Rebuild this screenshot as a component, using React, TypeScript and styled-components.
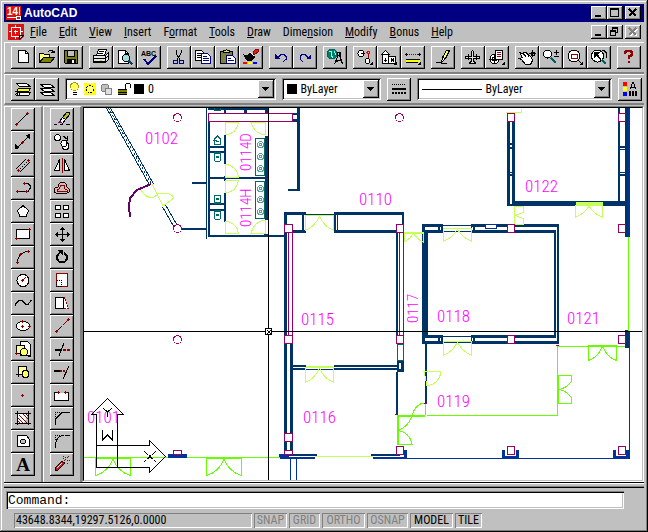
import React from 'react';
import styled, { createGlobalStyle, css } from 'styled-components';

const GlobalStyle = createGlobalStyle`
  * { box-sizing: border-box; }
  body { margin: 0; background: #c0c0c0; font-family: "Roboto Condensed", "Liberation Sans", sans-serif; font-size: 12px; color: #000; }
  button, input, select { font: inherit; color: inherit; margin: 0; }
`;

const raised = css`
  box-shadow: inset -1px -1px #000, inset 1px 1px #fff, inset -2px -2px #808080;
`;
const sunken = css`
  box-shadow: inset 1px 1px #808080, inset -1px -1px #fff;
`;

const Window = styled.div`
  display: flex;
  flex-direction: column;
  min-height: 100vh;
  padding: 4px;
  background: #c0c0c0;
  box-shadow: inset -1px -1px #000, inset 1px 1px #c0c0c0, inset -2px -2px #808080, inset 2px 2px #fff;
`;

const TitleBar = styled.header`
  display: flex;
  align-items: center;
  height: 18px;
  padding: 0 3px 0 2px;
  gap: 2px;
  background: #000080;
`;
const Title = styled.h1`
  flex: 1;
  margin: 0;
  color: #fff;
  font: bold 12px "Liberation Sans", sans-serif;
`;
const WindowButtons = styled.div`
  display: flex;
`;
const WindowButton = styled.button<{ $apart?: boolean }>`
  width: 16px;
  height: 14px;
  margin-left: ${(p) => (p.$apart ? 2 : 0)}px;
  padding: 0;
  border: 0;
  background: #c0c0c0;
  ${raised}
`;

const MenuRow = styled.div`
  display: flex;
  align-items: center;
  height: 20px;
  padding: 0 3px 0 4px;
`;
const MenuBar = styled.nav`
  flex: 1;
  display: flex;
`;
const MenuItem = styled.button`
  padding: 0 6px;
  border: 0;
  background: none;
  line-height: 18px;
`;

const Toolbar = styled.div<{ $height: number }>`
  display: flex;
  align-items: flex-start;
  gap: 6px;
  height: ${(p) => p.$height}px;
  border-top: 1px solid #fff;
  border-left: 1px solid #fff;
  border-bottom: 2px solid #808080;
  padding: 3px 2px 0 6px;
`;
const ButtonGroup = styled.div`
  display: flex;
`;
const ToolButton = styled.button`
  flex: none;
  width: 24px;
  height: 23px;
  padding: 0;
  border: 0;
  background: #c0c0c0;
  ${raised}
`;
const Glyph = styled.svg`
  display: block;
  fill: none;
  stroke: #000;
  shape-rendering: crispEdges;
`;

const Combo = styled.label<{ $grow: number; $basis: number }>`
  display: flex;
  align-items: center;
  flex: ${(p) => p.$grow} 1 ${(p) => p.$basis}px;
  min-width: 0;
  height: 22px;
  padding: 2px 2px 2px 5px;
  background: #fff;
  box-shadow: inset 1px 1px #808080, inset -1px -1px #fff, inset 2px 2px #000, inset -2px -2px #c0c0c0;
`;
const ComboSelect = styled.select`
  flex: 1;
  min-width: 0;
  appearance: none;
  border: 0;
  padding: 0 0 0 4px;
  background: transparent;
  outline: 0;
`;
const DropArrow = styled.span`
  width: 16px;
  height: 18px;
  background: #c0c0c0;
  ${raised}
`;
const Swatch = styled.span`
  width: 10px;
  height: 10px;
  background: #000;
`;
const LineSample = styled.span`
  width: 60px;
  height: 1px;
  background: #000;
`;

const Workspace = styled.main`
  flex: 1;
  display: flex;
  padding-top: 1px;
  min-height: 0;
`;
const Dock = styled.div<{ $width: number }>`
  flex: none;
  width: ${(p) => p.$width}px;
  padding: 1px 0 4px 6px;
  border-left: 1px solid #fff;
  border-top: 1px solid #fff;
  border-right: 2px solid #808080;
  display: flex;
  flex-direction: column;
`;
const Viewport = styled.section`
  flex: 1;
  min-width: 0;
  border: solid;
  border-width: 1px;
  border-color: #808080 #fff #fff #808080;
  display: flex;
`;
const ViewportInner = styled.div`
  flex: 1;
  min-width: 0;
  border: solid;
  border-width: 1px;
  border-color: #000 #c0c0c0 #c0c0c0 #000;
  background: #fff;
`;
const Drawing = styled.svg`
  display: block;
  width: 100%;
  height: 100%;
  fill: none;
  shape-rendering: crispEdges;
  text {
    font-family: "Roboto Condensed", "Liberation Sans", sans-serif;
    font-weight: 300;
    font-size: 17px;
    fill: #f0f;
  }
`;
const SideLabel = styled.text`
  && { font-size: 15px; }
`;

const Splitter = styled.div`
  height: 6px;
  border-top: 1px solid #000;
  border-bottom: 1px solid #000;
  box-shadow: inset 0 1px #fff, inset 0 -1px #808080;
`;
const CommandLine = styled.form`
  display: flex;
  align-items: center;
  height: 18px;
  margin: 3px 20px 4px 2px;
  padding: 0 2px;
  background: #fff;
  box-shadow: inset 1px 1px #808080, inset 2px 2px #000, inset -1px -1px #fff, inset -2px -2px #c0c0c0;
  font: 13px "Liberation Mono", monospace;
`;
const CommandInput = styled.input`
  flex: 1;
  min-width: 0;
  border: 0;
  padding: 0;
  outline: 0;
  background: transparent;
`;
const StatusBar = styled.footer`
  display: flex;
  gap: 2px;
  padding: 0 0 0 10px;
  height: 15px;
`;
const Coordinates = styled.output`
  width: 238px;
  padding: 0 2px;
  line-height: 15px;
  ${sunken}
`;
const Toggle = styled.button<{ $on?: boolean; $width: number }>`
  width: ${(p) => p.$width}px;
  padding: 0;
  border: 0;
  line-height: 15px;
  text-align: center;
  background: transparent;
  color: ${(p) => (p.$on ? '#000' : '#808080')};
  ${sunken}
`;

const RED = '#900000';
const Dots = ({ at }: { at: number[][] }) => (
  <>
    {at.map(([x, y]) => (
      <path key={`${x}-${y}`} d={`M${x - 1} ${y + 0.5}h3M${x + 0.5} ${y - 1}v3`} stroke={RED} />
    ))}
  </>
);
const Flyout = () => <path d="M20 15v4h-4z" fill="#000" stroke="none" />;

const icons: Record<string, React.ReactNode> = {
  New: <><path d="M7.5 4.5h7l3 3v9h-10z" fill="#fff" /><path d="M14.5 4.5v3h3" /></>,
  Open: <><path d="M4.5 16.5v-9h4l1 1h5v3" fill="#ffff80" /><path d="M4.5 16.5l4-5h11l-4 5z" fill="#808000" /><path d="M12.5 6.5l2-2h3l1 2M16 6.5h3v-2" /></>,
  Save: <><path d="M5.5 4.5h13v13h-12l-1-1z" fill="#808000" /><path d="M8.5 5v5.5h7V5" fill="#c0c0c0" /><path d="M8 13h8v4H8z" fill="#000" /><path d="M14 14v3" stroke="#fff" strokeWidth="2" /></>,
  Print: <><path d="M7.5 9.5l2-6h8l-2 6z" fill="#fff" /><path d="M10 5.5h5M9 7.5h5" /><path d="M4.5 9.5h12l3-3v7l-3 3h-12z" fill="#e8e8e8" /><path d="M4.5 12.5h12l3-3M16.5 9.5v7M5 15.5h11" /><path d="M11 14.5h2" stroke="#e0d000" /></>,
  Preview: <><path d="M5.5 4.5h7l3 3v10h-10z" fill="#fff" /><path d="M12.5 4.5v3h3" /><circle cx="13" cy="12" r="3.5" fill="#9fe0e0" /><path d="M15.5 14.5l4 4" strokeWidth="2" stroke="#103a60" /></>,
  Spelling: <><text x="4" y="10" fontSize="7" fontWeight="700" fontFamily="Liberation Sans, sans-serif" fill="#000" stroke="none">ABC</text><path d="M7 13l4 5 8-8" stroke="#000080" strokeWidth="2" /></>,
  Cut: <><path d="M9 4v3l4 7M14 4v3l-4 7" /><circle cx="8.5" cy="16" r="2" stroke="#000080" /><circle cx="14.5" cy="16" r="2" stroke="#000080" /></>,
  Copy: <><path d="M4.5 4.5h6l2 2v8h-8z" fill="#fff" /><path d="M6 7.5h4M6 9.5h5M6 11.5h4" /><path d="M10.5 7.5h6l3 3v7h-9z" fill="#fff" stroke="#000080" /><path d="M12 10.5h4M12 12.5h6M12 14.5h6" stroke="#000080" /></>,
  Paste: <><path d="M5.5 5.5h12v12h-12z" fill="#808040" /><path d="M8.5 6.5v-2h2l1-1 1 1h2v2z" fill="#e0e080" /><path d="M11.5 9.5h6l3 3v5h-9z" fill="#fff" stroke="#000080" /><path d="M13 12.5h3M13 14.5h6" stroke="#000080" /></>,
  'Match Properties': <><path d="M14 6l3-3h2v3l-4 3z" fill="#d02020" stroke={RED} /><path d="M11 7l5 4-3 3H8l-3-5 4 1z" fill="#000" /><path d="M11.5 6.5l4 4" stroke="#fff" /><path d="M4 17h4" stroke="#f00" strokeWidth="2" /><path d="M9 17h4" stroke="#ff0" strokeWidth="2" /><path d="M14 17h4" stroke="#00f" strokeWidth="2" /></>,
  Undo: <><path d="M9 11.500l3-3h3l2 2v3l-3 2" stroke="#000080" /><path d="M6 8v5h5z" fill="#000080" stroke="none" /></>,
  Redo: <><path d="M15 11.500l-3-3H9l-2 2v3l3 2" stroke="#000080" /><path d="M18 8v5h-5z" fill="#000080" stroke="none" /></>,
  'Launch Browser': <><circle cx="9" cy="8" r="5" fill="#008060" stroke="#006060" /><path d="M6 5l3 1-1 3 2 3M11 5l2 4" stroke="#80ffff" /><path d="M15.5 9l-4 9M16.5 9l3 9M13 14.500h5M12 16.500l4-2M16 6v4" /><circle cx="16" cy="8" r="2" /></>,
  'Object Snap': <><circle cx="8" cy="7.5" r="3" fill="#fff" /><path d="M8 7.5h4" /><path d="M15.5 7v6" stroke={RED} /><circle cx="15.5" cy="6.5" r="1.5" stroke="#f00" /><circle cx="14.5" cy="15" r="2.5" fill="#fff" /><Flyout /></>,
  UCS: <><path d="M4.5 8.5l4-4 4 4z" fill="#fff" /><path d="M5.5 8.5h6v9h-6z" fill="#fff" /><path d="M11.5 10.5h7v7h-7z" fill="#fff" /><path d="M8.5 12v4M7 14.5h3M14 12.5l3 3M17 12.5l-3 3" /><Flyout /></>,
  Distance: <><path d="M6 8.5h12" stroke={RED} strokeDasharray="1 1" /><path d="M4 8.5h3M17 8.5h3M5.5 7v3M18.5 7v3" /><path d="M5 13.5h14" /><path d="M5 15h14" stroke="#ff0" strokeWidth="2" /><path d="M5 16.5h12" /><Flyout /></>,
  Redraw: <><path d="M11.5 11.5l4-7h3l-4 8-4 4z" fill="#ffff60" /><path d="M11.5 11.5l-1 5 4-4z" fill="#fff" /><path d="M5 16.5h4l2 1h5" /></>,
  'Aerial View': <><path d="M4.500 10.500h6v-5l1-1 1 1v5h6v2h-6v3l2 1v1h-6v-1l2-1v-3h-6z" fill="#e0e0e0" /><path d="M7.500 8v6M15.500 8v6" /></>,
  'Named Views': <><circle cx="9.5" cy="13" r="4.500" fill="#fff" /><circle cx="9.5" cy="13" r="2" /><path d="M9.5 8v10M4 13.5h10" /><path d="M10.5 4.5h7v9h-7z" fill="#fff" /><path d="M12 6.5h4M12 8.5h4M12 10.5h4" stroke={RED} /><Flyout /></>,
  Pan: <><path d="M4.5 6.500l3 1 2-1 3 1 4 4 1 3-2 4h-5l-4-5-2-1 3-1z" fill="#fff" /><path d="M8 7.5l3 3M11 6.5l3 4M17.5 4v7M14 7.5h7M16 6h3v3h-3z" /></>,
  'Zoom Realtime': <><circle cx="8.500" cy="8" r="4" fill="#fff" /><path d="M12 12l5 5" strokeWidth="2" stroke="#006060" /><path d="M15 6.5h5M17.5 4v5M15 10.5h5" /></>,
  'Zoom Window': <><circle cx="11" cy="10" r="6" fill="#fff" /><path d="M8.5 8.5h6v4h-6z" stroke={RED} /><path d="M15 14l3 3" /><Flyout /></>,
  'Zoom Previous': <><circle cx="10.500" cy="10" r="6" fill="#fff" /><path d="M7 12V6h6l-2 2 3 5-1 1-4-4z" fill="#000" stroke="none" /><path d="M15 14l4 4" strokeWidth="2" stroke="#006060" /><path d="M15 4.500h2l2 2v5" /></>,
  Help: <><path d="M8 8V6h1V5h5v1h1v3h-1v1h-2v3" stroke={RED} strokeWidth="2" /><path d="M11 15h2v2h-2z" fill={RED} stroke="none" /></>,
  'Make Current': <><path d="M7.5 14.5h12l-2 3h-12z" fill="#fff" /><path d="M7.500 10.500h12l-2 3h-12z" fill="#ff0" /><path d="M5.500 5.500h10l4 3h-11z" fill="#fff" /><path d="M3.5 17.5l4-4M4 13.500h4v4" /></>,
  Layers: <><path d="M5.5 14.5h10l4 3h-10z" fill="#fff" /><path d="M5.5 10.500h10l4 3h-10z" fill="#fff" /><path d="M5.5 6.500h10l4 3h-10z" fill="#fff" /></>,
  Linetype: <><path d="M5 6.500h14" strokeDasharray="1 1" /><path d="M5 11h14" strokeWidth="2" /><path d="M5 15h14" strokeWidth="2" strokeDasharray="2 1" /></>,
  Properties: <><path d="M5 4h4v4H5z" fill="#f00" stroke="none" /><path d="M5 9h4v4H5z" fill="#ff0" stroke="none" /><path d="M5 14h4v4H5z" fill="#00f" stroke="none" /><path d="M12 11l3-7 3 7M13 9.5h4" /><path d="M11 15.5h9" strokeWidth="5" strokeDasharray="2 1" /></>,
  Line: <><path d="M6 16L17 5" /><Dots at={[[5, 16], [16, 5]]} /></>,
  'Construction Line': <><path d="M5 18L19 4" /><path d="M4 18v-5l5 4zM19 3v5l-5-4z" fill="#000" stroke="none" /><Dots at={[[11, 11]]} /></>,
  Multiline: <><path d="M5 15L15 5M9 18L19 8" /><path d="M7 17L17 7" strokeDasharray="1 2" /><Dots at={[[7, 16], [17, 6]]} /></>,
  Polyline: <><path d="M7 14.5h9M13 6.5h4l2 2v3l-2 3" /><Dots at={[[6, 14], [15, 14], [13, 6]]} /></>,
  Polygon: <path d="M12 5.5l5.5 5-2.5 6h-6l-2.5-6z" fill="#fff" />,
  Rectangle: <><path d="M5.5 6.5h13v9h-13z" fill="#fff" /><Dots at={[[5, 15], [18, 6]]} /></>,
  Arc: <><path d="M6.5 17q0-10 11-12" /><Dots at={[[6, 16], [9, 8], [17, 5]]} /></>,
  Circle: <><circle cx="12" cy="11.5" r="6" fill="#fff" /><path d="M12 11l3-3" stroke={RED} /><Dots at={[[11, 11]]} /></>,
  Spline: <path d="M4.5 14v-2l4-4h2l4 4h3l3-4" />,
  Ellipse: <><ellipse cx="12" cy="11" rx="7" ry="4.5" fill="#fff" /><Dots at={[[11, 6], [11, 11], [18, 11]]} /></>,
  'Insert Block': <><path d="M9.5 3.5h7l3 3v11h-10z" fill="#fff" /><path d="M5.5 7.5h8v8h-8z" fill="#ffffa0" /><circle cx="13" cy="14" r="3.5" fill="#ffff60" /><Dots at={[[5, 15]]} /><Flyout /></>,
  'Make Block': <><path d="M7.5 5.5h8v8h-8z" fill="#ffffa0" /><circle cx="14.5" cy="13" r="3.5" fill="#ffff60" /><path d="M5 13.5h5M7.500 11v5" /></>,
  Point: <Dots at={[[11, 11]]} />,
  Hatch: <><path d="M6.5 4v14M17.5 4v14M4 6.5h16M4 16.5h16" /><path d="M7 7h10l-4 9H7z" fill="#fff" stroke="none" /><path d="M8 8l8 8M12 7l5 5M7 11l5 5M15 7l2 2M7 14l2 2" stroke={RED} /></>,
  Region: <><path d="M6.5 5.5h9l3 4v7h-12z" fill="#fff" /><circle cx="12" cy="11.5" r="2.5" fill="#c0c0c0" /></>,
  Text: <text x="12" y="18" textAnchor="middle" fontSize="19" fontWeight="700" fontFamily="Liberation Serif, serif" fill="#000" stroke="none">A</text>,
  Erase: <><path d="M4 16.500h3M10 16.500h3M16 16.500h4" /><path d="M12.500 9.500l4-5h3v2l-4 5z" fill="#c0c020" /><path d="M9.500 13.500l3-4 3 2-3 4z" fill="#fff" /><path d="M8 15l2-2 2 2" fill="#800080" stroke="#800080" /></>,
  'Copy Object': <><circle cx="7.5" cy="6.5" r="3" fill="#fff" /><circle cx="15.5" cy="15" r="3.500" fill="#fff" /><circle cx="14" cy="12.500" r="3" fill="#fff" /><path d="M13 5l4 3M17.500 5v4h-3" /></>,
  Mirror: <><path d="M9.5 5.5v11h-5zM14.5 5.5v11h5z" fill="#fff" /><path d="M12 4v15" stroke={RED} /></>,
  Offset: <><path d="M8 10l1-3 2-2h3l2 2 1 3 2 2v3l-2 1H6l-2-1v-3l2-2z" fill="#e8b0b0" /><path d="M9 12l2-4h3l1 4 2 1v1H7v-1z" stroke={RED} fill="#c0c0c0" /></>,
  Array: <path d="M5.5 5.5h5v4h-5zM13.5 5.5h5v4h-5zM5.5 13.5h5v4h-5zM13.5 13.5h5v4h-5z" fill="#fff" />,
  Move: <><path d="M12.5 5v14M6 11.5h13" /><path d="M12.5 4l3 3h-6zM12.5 19l3-3h-6zM5 11.5l3-3v6zM20 11.5l-3-3v6z" fill="#000" stroke="none" /></>,
  Rotate: <><path d="M14 7a5 5 0 1 1-4 0" strokeWidth="2" /><path d="M7 4h6v6z" fill="#000" stroke="none" /></>,
  Scale: <><path d="M6.5 4.5h11v13h-11z" fill="#fff" stroke={RED} /><path d="M6.5 11.5h5v6h-5z" strokeDasharray="1 1" /></>,
  Stretch: <><path d="M5.5 5.5h8v11h-8z" fill="#fff" /><path d="M13.500 5.5h1l4 11h-5" fill="#fff" stroke={RED} strokeDasharray="2 1" /></>,
  Lengthen: <><path d="M6 17l5-5" /><path d="M11 12l7-7" stroke={RED} strokeDasharray="2 1" /><Dots at={[[6, 16], [18, 4]]} /></>,
  Trim: <><path d="M5 12h6" strokeWidth="2" /><path d="M9 18L14 5" /><path d="M13 12h7" stroke={RED} strokeWidth="2" strokeDasharray="3 1" /></>,
  Extend: <><path d="M4 10h6" strokeWidth="2" /><path d="M10 10h6" stroke={RED} strokeWidth="2" strokeDasharray="2 1" /><path d="M13 18l6-13" /></>,
  Break: <><path d="M8 8.5H4.5v8h14v-8H15" fill="#fff" /><Dots at={[[8, 8], [15, 8]]} /></>,
  Chamfer: <><path d="M5.5 18v-6l7-7h7" /><path d="M5.5 10V5.5h6" strokeDasharray="1 1" /></>,
  Fillet: <><path d="M5.5 18v-4q1-8 9-9h5" /><path d="M5.5 10V5.5h6" strokeDasharray="1 1" /></>,
  Explode: <><path d="M5.500 14.500l6-6 3 1v1l-7 7h-2z" fill="#d01818" /><path d="M7 15l5-5" stroke="#fff" /><path d="M14 8l5-5M15 4l1 2M20 7.500h-3M17 10l2 1M13.500 3v3" stroke={RED} strokeDasharray="1 1" /></>,
};

const Tool = ({ name }: { name: string }) => (
  <ToolButton type="button" aria-label={name}>
    <Glyph width="24" height="23" viewBox="0 0 24 23">{icons[name]}</Glyph>
  </ToolButton>
);

const standardTools = [
  ['New', 'Open', 'Save'],
  ['Print', 'Preview', 'Spelling'],
  ['Cut', 'Copy', 'Paste', 'Match Properties'],
  ['Undo', 'Redo'],
  ['Launch Browser'],
  ['Object Snap', 'UCS', 'Distance'],
  ['Redraw'],
  ['Aerial View', 'Named Views'],
  ['Pan', 'Zoom Realtime', 'Zoom Window', 'Zoom Previous'],
  ['Help'],
];
const drawTools = ['Line', 'Construction Line', 'Multiline', 'Polyline', 'Polygon', 'Rectangle', 'Arc', 'Circle', 'Spline', 'Ellipse', 'Insert Block', 'Make Block', 'Point', 'Hatch', 'Region', 'Text'];
const modifyTools = ['Erase', 'Copy Object', 'Mirror', 'Offset', 'Array', 'Move', 'Rotate', 'Scale', 'Stretch', 'Lengthen', 'Trim', 'Extend', 'Break', 'Chamfer', 'Fillet', 'Explode'];

const menus: [string, number][] = [['File', 0], ['Edit', 0], ['View', 0], ['Insert', 0], ['Format', 1], ['Tools', 0], ['Draw', 0], ['Dimension', 4], ['Modify', 0], ['Bonus', 0], ['Help', 0]];

const Controls = ({ child }: { child?: boolean }) => (
  <WindowButtons>
    <WindowButton type="button" aria-label="Minimize">
      <Glyph width="16" height="14" viewBox="0 0 16 14"><path d="M4 10h6" strokeWidth="2" /></Glyph>
    </WindowButton>
    <WindowButton type="button" aria-label={child ? 'Restore' : 'Maximize'}>
      <Glyph width="16" height="14" viewBox="0 0 16 14">
        {child
          ? <path d="M5.5 6V2.5h5v5H9M5 3.5h6M3.5 5.5h5v5h-5zM3 6.5h6" />
          : <path d="M3.5 2.5h8v8h-8zM3 3.5h9" />}
      </Glyph>
    </WindowButton>
    <WindowButton type="button" aria-label="Close" $apart>
      <Glyph width="16" height="14" viewBox="0 0 16 14">
        {child && <path d="M5 4l7 7M12 4l-7 7" stroke="#fff" strokeWidth="2" />}
        <path d="M4 3l7 7M11 3l-7 7" strokeWidth="1.5" stroke={child ? '#808080' : '#000'} />
      </Glyph>
    </WindowButton>
  </WindowButtons>
);

const Arrow = () => (
  <DropArrow aria-hidden>
    <Glyph width="16" height="18" viewBox="0 0 16 18"><path d="M4 7h7l-3.5 4z" fill="#000" stroke="none" /></Glyph>
  </DropArrow>
);

/* Double door hanging below a lintel: x0..x1, from y down to y+h. */
const doorDown = (x0: number, x1: number, y: number, h: number) => {
  const c = (x0 + x1) / 2;
  const r = c - x0;
  return `M${x0} ${y}H${x1}V${y + h}Q${c + r / 3} ${y + h - 3} ${c} ${y + 1}Q${c - r / 3} ${y + h - 3} ${x0} ${y + h}Z`;
};
/* Double door opening to the right of a jamb. */
const doorRight = (x: number, y0: number, y1: number, w: number) => {
  const c = (y0 + y1) / 2;
  return `M${x} ${y0}H${x + w}V${y0 + 6}Q${x + w - 6} ${c - 1} ${x + 1} ${c}Q${x + w - 6} ${c + 1} ${x + w} ${y1 - 6}V${y1}H${x}Z`;
};

const rooms: [string, number, number][] = [['0102', 145, 144], ['0110', 359, 205], ['0122', 525, 192], ['0115', 301, 325], ['0118', 437, 322], ['0121', 567, 324], ['0116', 303, 423], ['0119', 437, 407], ['0101', 87, 423]];
const sideRooms: [string, number, number][] = [['0114D', 251, 171], ['0114H', 251, 227], ['0117', 418, 323]];

const FloorPlan = () => (
  <Drawing viewBox="84 108 558 372" preserveAspectRatio="xMidYMid slice" role="img" aria-label="Floor plan">
    <g fill="#036">
      <path d="M192 182h14v2h-14zM181 228h25v2h-25zM206 108h1v131h-1zM208 121h2v115h-2zM208 108h59v2h-59zM224 108h2v5h-2zM244 108h3v5h-3zM265 108h3v5h-3z" />
      <path d="M224 135h2v29h-2zM224 176h2v5h-2zM224 193h2v29h-2zM265 136h3v84h-3zM209 177h57v2h-57zM208 235h77v2h-77zM264 234h4v3h-4z" />
      <path d="M209 146h16v2h-16zM209 151h16v2h-16zM209 203h16v2h-16zM209 209h16v2h-16z" />
      <path d="M297 108h3v83h-3zM288 189h12v2h-12zM293 113h4v2h-4zM293 119h4v3h-4z" />
      <path d="M284 212h22v3h-22zM284 212h3v13h-3zM293 230h13v3h-13zM302 214h2v17h-2zM305 213h1v19h-1zM306 214h28v1h-28z" />
      <path d="M334 212h70v3h-70zM402 212h2v13h-2zM334 230h63v3h-63zM334 212h2v20h-2zM337 214h1v17h-1z" />
      <path d="M284 233h3v103h-3zM396 233h2v103h-2zM284 344h3v108h-3zM290 344h3v90h-3zM290 442h3v9h-3z" />
      <path d="M422 224h21v9h-21v-9M425 227v3h13v-3zM440 227v3h1v-3z" fillRule="evenodd" />
      <path d="M422 233h6v102h-6zM443 225h28v1h-28zM443 231h28v1h-28zM443 336h28v1h-28zM443 342h28v1h-28z" />
      <path d="M422 335h21v9h-21v-9M425 338v3h13v-3zM440 338v3h1v-3z" fillRule="evenodd" />
      <path d="M471 224h88v120h-88v-9h83v-102h-83zM475 227v3h81v108h-81v3h82v-114zM472 227v3h1v-3zM472 338v3h1v-3z" fillRule="evenodd" />
      <path d="M425 344h2v59h-2zM293 365h13v2h-13zM293 368h13v2h-13zM306 369h28v1h-28zM334 365h63v2h-63zM334 368h63v2h-63zM397 361h7v11h-7zM396 372h2v43h-2z" />
      <path d="M284 454h33v2h-33zM371 454h29v2h-29z" />
      <path d="M507 121h3v84h-3zM512 121h3v84h-3zM507 204h8v2h-8zM512 201h114v5h-114zM508 143h6v2h-6zM508 147h6v2h-6zM508 172h6v1h-6zM508 174h6v2h-6z" />
      <path d="M618 108h2v94h-2zM625 108h3v129h-3zM619 146h7v2h-7zM619 149h7v1h-7zM619 172h7v1h-7zM619 174h7v2h-7zM625 330h4v18h-4z" />
    </g>
    <path d="M399 363h2v6h-2z" fill="#fff" />
    <path d="M106.500 108L149.500 185M110.500 108L153.500 184M162.500 207l11 19M165.500 205l11 19" stroke="#036" />
    <path d="M108.500 108L151.500 184" stroke="#036" strokeDasharray="2 2" />
    <g fill="#039">
      <path d="M628 108h2v126h-2zM627 230h3v7h-3zM629 332h1v127h-1zM407 458h223v1h-223zM280 457h35v2h-35zM279 454h10v3h-10zM373 457h34v2h-34zM404 450h3v9h-3z" />
      <path d="M168 454h19v4h-19zM502 450h3v9h-3zM502 456h17v3h-17zM516 450h3v9h-3zM613 450h3v9h-3zM613 456h17v3h-17zM626 450h3v9h-3zM290 459h1v21h-1zM296 459h1v21h-1z" />
    </g>
    <path d="M485.5 224.5h11v4h-11z" stroke="#039" fill="#fff" />

    <g stroke="#c6ff5c">
      <path d={doorDown(305.5, 333.5, 215, 15)} />
      <path d={doorDown(404, 423, 232, 10)} />
      <path d="M403 233h20M306 367h28" strokeWidth="2" />
      <path d={doorDown(443.5, 471.5, 228, 13)} />
      <path d={doorDown(443.5, 471.5, 341, 14)} />
      <path d={doorDown(305.5, 333.5, 367, 15)} />
      <path d={doorDown(575.5, 602.5, 205, 12)} />
      <path d="M576 204h27" strokeWidth="4" />
      <path d={doorRight(514.5, 206.5, 224.5, 9)} />
      <path d="M506 112.5h15v-4M424 371.5h17q-2 13-14 14zM315 456.5h58" />
      <path d="M152 184l11 22M141 190q8 12 16 5M157 194q13-3 17 4l-11 8" />
      <path d="M225.5 135v-12.5h13q-2 11-13 12.500M265 135v-12.500h-14q3 11 14 12.500M225.500 164v13.500h13q-1-11-13-13.500M225.500 193v-12.500h13q-2 11-13 12.500M225.500 221v12.500h13q-1-10-13-12.500M265 220v13.500h-14q3-12 14-13.500" />
    </g>
    <g stroke="#6f0">
      <path d="M84 457.5h84M187 457.5h93M628.5 237v95M557 346.5h68M557.5 345v70.5H427" />
      <path d={doorDown(95.5, 130.5, 458.5, 17)} />
      <path d={doorDown(206.5, 241.5, 458.5, 17)} />
      <path d={doorDown(588.5, 616.5, 345.5, 15)} />
      <path d={doorRight(558.5, 375.5, 403.5, 13)} />
      <path d="M397 416h28" strokeWidth="2" />
      <path d="M425.5 415V403q-10 0-14 14-4 10-13 13.500 11 2 13.500 13.500h-15V417" />
      <path d="M398 416v28" strokeWidth="2" />
      <path d="M589 346h28" strokeWidth="2" />
    </g>
    <path d="M151 184l-14 6-7 8-1 8 1 11" stroke="#606" strokeWidth="2" />
    <g stroke="#906">
      <circle cx="177.5" cy="117.5" r="4" />
      <circle cx="177.5" cy="228.5" r="4" fill="#fff" />
      <circle cx="177.5" cy="339.5" r="4" />
      <circle cx="399.5" cy="117.5" r="4" />
      <path d="M208.5 113.5h84v8h-84z" fill="#fff" />
      <path d="M288.5 232v104M292.5 232v104M399.5 232v104M403.5 232v104" />
      <path d="M284.5 224.5h8v8h-8zM396.5 224.5h7v8h-7zM284.5 335.5h8v8h-8zM396.5 335.5h7v8h-7zM284.5 433.5h8v8h-8zM284.5 450.5h8v4h-8zM396.5 446.5h7v8h-7zM173.5 450.5h8v4h-8z" fill="#fff" />
      <path d="M507.5 113.5h7v8h-7zM618.5 113.5h7v8h-7zM507.5 224.5h7v8h-7zM618.5 224.5h7v8h-7zM507.5 335.5h7v8h-7zM618.5 335.5h7v8h-7zM507.5 446.5h7v8h-7zM618.5 446.5h7v8h-7z" fill="#fff" />
      <path d="M395 414.5h3M424 403.5h3M556 345h3" />
    </g>
    <g stroke="#066">
      <path d="M397.5 344.5h6v16h-6zM255.5 138.5h9v37h-9zM255.5 181.5h9v37h-9z" />
      <path d="M214.500 144v-5l3-3 3 3v5zM212.500 140.500h4M216 141.500h3M214 144.500h7" />
      {[[152, 1], [194, 0], [210, 1]].map(([y, lid]) => (
        <g key={y}>
          <path d={`M214.5 ${y + 1.500}h6v7l-1 1h-4l-1-1z`} />
          <path d={`M214 ${y + (lid ? 1 : 9)}h7`} strokeWidth="2" />
          <path d={`M216 ${y + 5}h3`} strokeWidth="2" />
        </g>
      ))}
      <path d="M214.500 108v2.500h6v-2.500" />
      {[144.5, 156.5, 168.5, 188.5, 199.5, 211.5].map((y) => (
        <g key={y} stroke="#5c9c9c"><circle cx="260.5" cy={y} r="3" /><circle cx="260.5" cy={y} r="1" /></g>
      ))}
    </g>

    {rooms.map(([label, x, y]) => <text key={label} x={x} y={y}>{label}</text>)}
    {sideRooms.map(([label, x, y]) => (
      <SideLabel key={label} transform={`translate(${x} ${y}) rotate(-90)`}>{label}</SideLabel>
    ))}

    <g stroke="#000">
      <path d="M96.5 467.5v-53h-5l16-16 16 16h-6v53M96.5 445.5h53v-5l16 16-16 16v-5h-53" />
      <path d="M102.5 430v10l5-5 5 5v-10M103 408l4.5 4 4.500-4M107.500 412v5" />
      <path d="M144 451l12 11M156 451l-12 11" strokeDasharray="5 2" />
      <path d="M84 331.5h181M272 331.5h370M268.5 108v220M268.5 335v145M265.5 328.5h6v6h-6zM267 330l4 4M271 330l-4 4" />
    </g>
  </Drawing>
);

export default function App() {
  return (
    <Window>
      <GlobalStyle />
      <TitleBar>
        <Glyph width="16" height="16" viewBox="0 0 16 16">
          <path d="M0 1h15v14H0z" fill="#e01010" stroke="none" />
          <text x="1" y="10" fontSize="10" fontWeight="700" fontFamily="Liberation Sans, sans-serif" fill="#fff" stroke="none">14</text>
          <path d="M1 12.5h9M13.5 2v8M10.5 11.5h4v3h-4z" stroke="#fff" />
          <path d="M0 15.5h15M15.5 1v14" />
        </Glyph>
        <Title>AutoCAD</Title>
        <Controls />
      </TitleBar>
      <MenuRow>
        <Glyph width="16" height="16" viewBox="0 0 16 16">
          <path d="M0 0h16v12l-4 4H0z" fill="#e01010" stroke="none" />
          <path d="M3.5 3.5h9v9h-9zM7.5 1v3M7.5 12v3M1 7.5h3M12 7.5h3M6 7.5h4M7.5 6v4" stroke="#fff" />
          <path d="M11.5 15.5v-4h4z" fill="#c0c0c0" />
        </Glyph>
        <MenuBar>
          {menus.map(([name, key]) => (
            <MenuItem type="button" key={name}>
              {name.slice(0, key)}<u>{name[key]}</u>{name.slice(key + 1)}
            </MenuItem>
          ))}
        </MenuBar>
        <Controls child />
      </MenuRow>
      <Toolbar $height={32} role="toolbar" aria-label="Standard">
        {standardTools.map((group) => (
          <ButtonGroup key={group[0]}>{group.map((name) => <Tool key={name} name={name} />)}</ButtonGroup>
        ))}
      </Toolbar>
      <Toolbar $height={31} role="toolbar" aria-label="Object Properties">
        <ButtonGroup><Tool name="Make Current" /><Tool name="Layers" /></ButtonGroup>
        <Combo $grow={1} $basis={209}>
          <Glyph width="64" height="16" viewBox="0 0 64 16">
            <circle cx="4.5" cy="5.5" r="4" fill="#ffff60" stroke="#a0a000" /><path d="M3 11.5h4M3 13.5h4" />
            <path d="M14.5 2.5h11v11h-11z" fill="#ff0" stroke="#ff0" strokeDasharray="2 1" /><circle cx="20" cy="8" r="3.5" fill="#ffff80" strokeDasharray="2 1" />
            <circle cx="35" cy="7" r="4" fill="#c0c0c0" stroke="#808080" /><path d="M35.5 7.5h6v6h-6z" stroke="#808080" fill="#e0e0e0" />
            <path d="M48 8h9v6h-9z" fill="#808000" stroke="none" /><path d="M48 8.5h9M48 11.5h9M48 13.5h9M55.5 8V3.5l1-1h3l1 1V7" />
          </Glyph>
          <Swatch />
          <ComboSelect aria-label="Layer"><option>0</option></ComboSelect>
          <Arrow />
        </Combo>
        <Combo $grow={0} $basis={99}>
          <Swatch />
          <ComboSelect aria-label="Color"><option>ByLayer</option></ComboSelect>
          <Arrow />
        </Combo>
        <Tool name="Linetype" />
        <Combo $grow={1} $basis={194}>
          <LineSample />
          <ComboSelect aria-label="Linetype name"><option>ByLayer</option></ComboSelect>
          <Arrow />
        </Combo>
        <Tool name="Properties" />
      </Toolbar>
      <Workspace>
        <Dock $width={39} role="toolbar" aria-label="Draw">{drawTools.map((name) => <Tool key={name} name={name} />)}</Dock>
        <Dock $width={39} role="toolbar" aria-label="Modify">{modifyTools.map((name) => <Tool key={name} name={name} />)}</Dock>
        <Viewport><ViewportInner><FloorPlan /></ViewportInner></Viewport>
      </Workspace>
      <Splitter />
      <CommandLine onSubmit={(e) => e.preventDefault()}>
        <label htmlFor="command">Command:</label>
        <CommandInput id="command" />
      </CommandLine>
      <StatusBar>
        <Coordinates>43648.8344,19297.5126,0.0000</Coordinates>
        <Toggle type="button" $width={33}>SNAP</Toggle>
        <Toggle type="button" $width={31}>GRID</Toggle>
        <Toggle type="button" $width={43}>ORTHO</Toggle>
        <Toggle type="button" $width={41}>OSNAP</Toggle>
        <Toggle type="button" $width={43} $on>MODEL</Toggle>
        <Toggle type="button" $width={27} $on>TILE</Toggle>
      </StatusBar>
    </Window>
  );
}
